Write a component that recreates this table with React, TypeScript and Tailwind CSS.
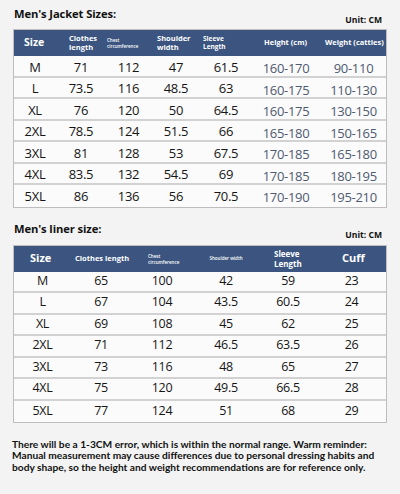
import React from 'react';

const jacketRows = [
  ['M', '71', '112', '47', '61.5', '160-170', '90-110'],
  ['L', '73.5', '116', '48.5', '63', '160-175', '110-130'],
  ['XL', '76', '120', '50', '64.5', '160-175', '130-150'],
  ['2XL', '78.5', '124', '51.5', '66', '165-180', '150-165'],
  ['3XL', '81', '128', '53', '67.5', '170-185', '165-180'],
  ['4XL', '83.5', '132', '54.5', '69', '170-185', '180-195'],
  ['5XL', '86', '136', '56', '70.5', '170-190', '195-210'],
];

const linerRows = [
  ['M', '65', '100', '42', '59', '23'],
  ['L', '67', '104', '43.5', '60.5', '24'],
  ['XL', '69', '108', '45', '62', '25'],
  ['2XL', '71', '112', '46.5', '63.5', '26'],
  ['3XL', '73', '116', '48', '65', '27'],
  ['4XL', '75', '120', '49.5', '66.5', '28'],
  ['5XL', '77', '124', '51', '68', '29'],
];

const font = { fontFamily: '"Open Sans", "Noto Sans", sans-serif' };

function SectionTitle({ title }: { title: string }) {
  return (
    <div className="flex items-end justify-between px-[1px]">
      <h2 className="mb-[5px] text-[11.2px] font-bold text-[#111] leading-[13px] tracking-[-0.1px]">{title}</h2>
      <span className="mr-[4px] text-[8.6px] font-bold text-[#111] leading-[10px]">Unit: CM</span>
    </div>
  );
}

function App() {
  return (
    <div className="w-[400px] h-[494px] bg-[#f3f3f3] overflow-hidden" style={font}>
      <div className="px-[13px] pt-[7px]">
        <SectionTitle title="Men's Jacket Sizes:" />

        <div className="mt-[4px] w-[374px] border border-[#bdbdbd] bg-[#fbfbfb]">
          <div className="grid grid-cols-[42px_50px_45px_50px_50px_70px_65px] h-[26px] bg-[#3b5580] text-white font-bold items-center">
            <div className="pl-[10px] text-[10.5px]">Size</div>
            <div className="pl-[13px] text-[7.5px] leading-[9px]">Clothes<br />length</div>
            <div className="pl-[1px] text-[4.5px] leading-[6px] font-semibold">Chest<br />circumference</div>
            <div className="pl-[6px] text-[7.5px] leading-[9px]">Shoulder<br />width</div>
            <div className="pl-[2px] text-[6.5px] leading-[8px]">Sleeve<br />Length</div>
            <div className="pl-[13px] text-[7.5px]">Height (cm)</div>
            <div className="pl-[4px] text-[7.5px]">Weight (catties)</div>
          </div>
          {jacketRows.map((r, i) => (
            <div
              key={r[0]}
              className={`grid grid-cols-[42px_50px_45px_50px_50px_70px_65px] h-[21.5px] items-center text-center ${i < jacketRows.length - 1 ? 'border-b-2 border-[#d2d2d2]' : ''}`}
            >
              {r.map((c, j) => (
                <div
                  key={j}
                  className={
                    j >= 5
                      ? 'text-[13px] text-[#4e5a70] pt-[3px] tracking-[-0.3px]'
                      : 'text-[13px] font-medium text-[#151515] tracking-[-0.3px]'
                  }
                >
                  {c}
                </div>
              ))}
            </div>
          ))}
        </div>

        <div className="mt-[14px]">
          <SectionTitle title="Men's liner size:" />
        </div>

        <div className="mt-[5px] w-[374px] border border-[#bdbdbd] bg-[#fbfbfb]">
          <div className="grid grid-cols-[57px_60px_62px_66px_58px_69px] h-[26px] bg-[#3b5580] text-white font-bold items-center">
            <div className="pl-[16px] text-[11px]">Size</div>
            <div className="pl-[4px] text-[7.5px]">Clothes length</div>
            <div className="pl-[17px] text-[4.5px] leading-[6px] font-semibold">Chest<br />circumference</div>
            <div className="text-center text-[4.5px] font-semibold">Shoulder width</div>
            <div className="pl-[15px] text-[8px] leading-[9.5px]">Sleeve<br />Length</div>
            <div className="pl-[25px] text-[11px]">Cuff</div>
          </div>
          {linerRows.map((r, i) => (
            <div
              key={r[0]}
              className={`grid grid-cols-[57px_60px_62px_66px_58px_69px] h-[21.5px] items-center text-center ${i < linerRows.length - 1 ? 'border-b-2 border-[#d2d2d2]' : ''}`}
            >
              {r.map((c, j) => (
                <div key={j} className="text-[12.5px] text-[#151515] tracking-[-0.3px]">
                  {c}
                </div>
              ))}
            </div>
          ))}
        </div>

        <p
          className="mt-[16px] -ml-[1px] text-[10.2px] font-bold leading-[11.4px] text-[#111]"
          style={{ fontFamily: 'Lato, "Open Sans", sans-serif' }}
        >
          There will be a 1-3CM error, which is within the normal range. Warm reminder:
          <br />
          Manual measurement may cause differences due to personal dressing habits and
          <br />
          body shape, so the height and weight recommendations are for reference only.
        </p>
      </div>
    </div>
  );
}

export default App;
